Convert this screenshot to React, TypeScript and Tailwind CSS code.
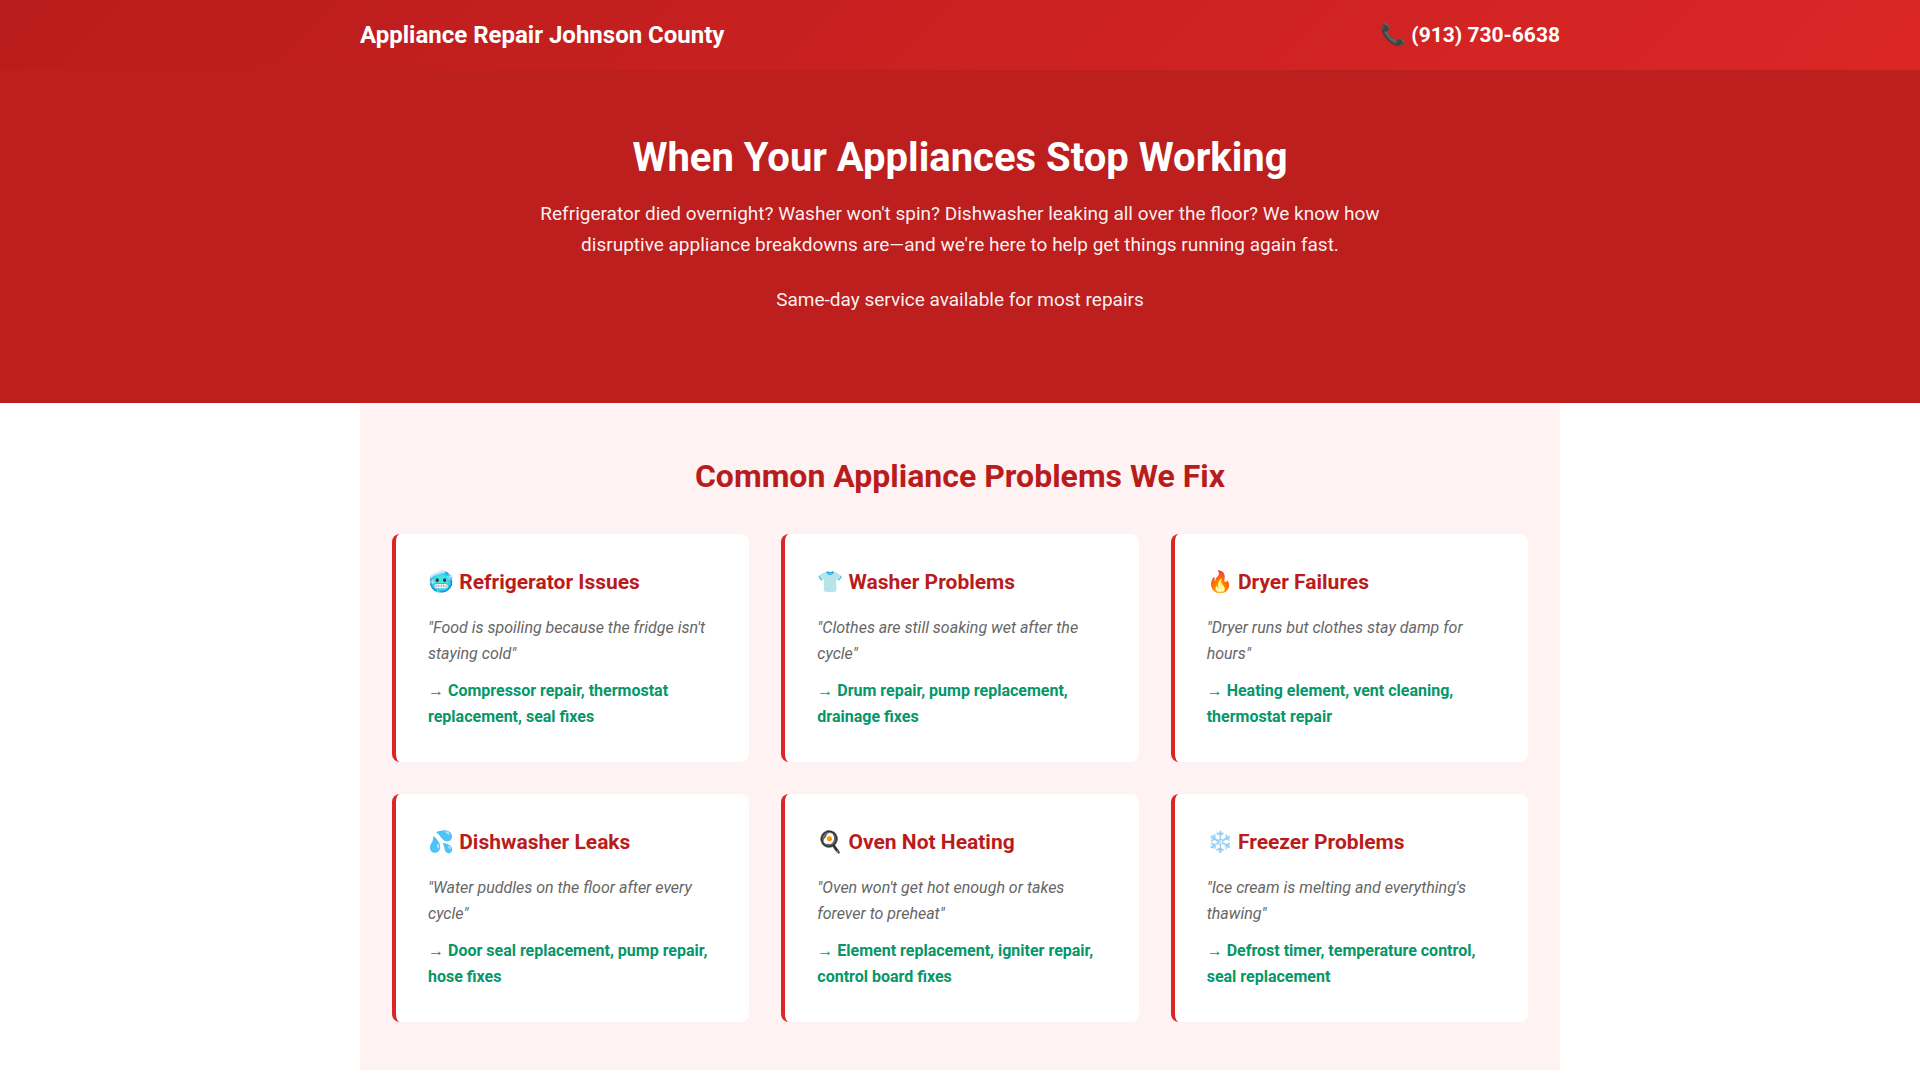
import React from 'react';

interface Problem {
  icon: string;
  title: string;
  quote: string;
  fix: string;
}

const problems: Problem[] = [
  {
    icon: '🥶',
    title: 'Refrigerator Issues',
    quote: '"Food is spoiling because the fridge isn\'t staying cold"',
    fix: 'Compressor repair, thermostat replacement, seal fixes',
  },
  {
    icon: '👕',
    title: 'Washer Problems',
    quote: '"Clothes are still soaking wet after the cycle"',
    fix: 'Drum repair, pump replacement, drainage fixes',
  },
  {
    icon: '🔥',
    title: 'Dryer Failures',
    quote: '"Dryer runs but clothes stay damp for hours"',
    fix: 'Heating element, vent cleaning, thermostat repair',
  },
  {
    icon: '💦',
    title: 'Dishwasher Leaks',
    quote: '"Water puddles on the floor after every cycle"',
    fix: 'Door seal replacement, pump repair, hose fixes',
  },
  {
    icon: '🍳',
    title: 'Oven Not Heating',
    quote: '"Oven won\'t get hot enough or takes forever to preheat"',
    fix: 'Element replacement, igniter repair, control board fixes',
  },
  {
    icon: '❄️',
    title: 'Freezer Problems',
    quote: '"Ice cream is melting and everything\'s thawing"',
    fix: 'Defrost timer, temperature control, seal replacement',
  },
];

function ProblemCard({ problem }: { problem: Problem }) {
  return (
    <article className="rounded-lg border-l-4 border-[#dc2626] bg-white p-8">
      <h3 className="mb-4 text-[21px] leading-[33px] font-bold text-[#b91c1c]">
        {`${problem.icon} ${problem.title}`}
      </h3>
      <p className="mb-[11px] leading-[26px] text-[#666666] italic">{problem.quote}</p>
      <p className="leading-[26px] font-bold text-[#059669]">{`→ ${problem.fix}`}</p>
    </article>
  );
}

export default function App() {
  return (
    <div className="min-h-screen bg-white font-[Roboto,'Liberation_Sans',sans-serif] text-base">
      <header className="bg-linear-135 from-[#b91c1c] to-[#dc2626] px-8 py-4 text-white">
        <div className="mx-auto flex max-w-[1200px] items-center justify-between">
          <div className="text-2xl leading-[38px] font-bold">Appliance Repair Johnson County</div>
          <a href="tel:9137306638" className="text-[21px] leading-[33px] font-bold">
            📞 (913) 730-6638
          </a>
        </div>
      </header>

      <section className="bg-[#bd1e1e] px-8 py-16 text-center text-white">
        <h1 className="mb-4 text-[40px] leading-[48px] font-bold">When Your Appliances Stop Working</h1>
        <p className="mx-auto mb-6 max-w-[900px] text-[19px] leading-[31px] text-white/95">
          Refrigerator died overnight? Washer won't spin? Dishwasher leaking all over the floor? We know how
          disruptive appliance breakdowns are—and we're here to help get things running again fast.
        </p>
        <p className="mb-6 text-[19px] leading-[31px] text-white/95">Same-day service available for most repairs</p>
      </section>

      <section className="mx-auto max-w-[1200px] bg-[#fef2f2] px-8 py-12">
        <h2 className="mb-8 text-center text-[32px] leading-[51px] font-bold text-[#b91c1c]">
          Common Appliance Problems We Fix
        </h2>
        <div className="grid grid-cols-1 gap-8 md:grid-cols-2 lg:grid-cols-3">
          {problems.map((problem) => (
            <ProblemCard key={problem.title} problem={problem} />
          ))}
        </div>
      </section>
    </div>
  );
}
